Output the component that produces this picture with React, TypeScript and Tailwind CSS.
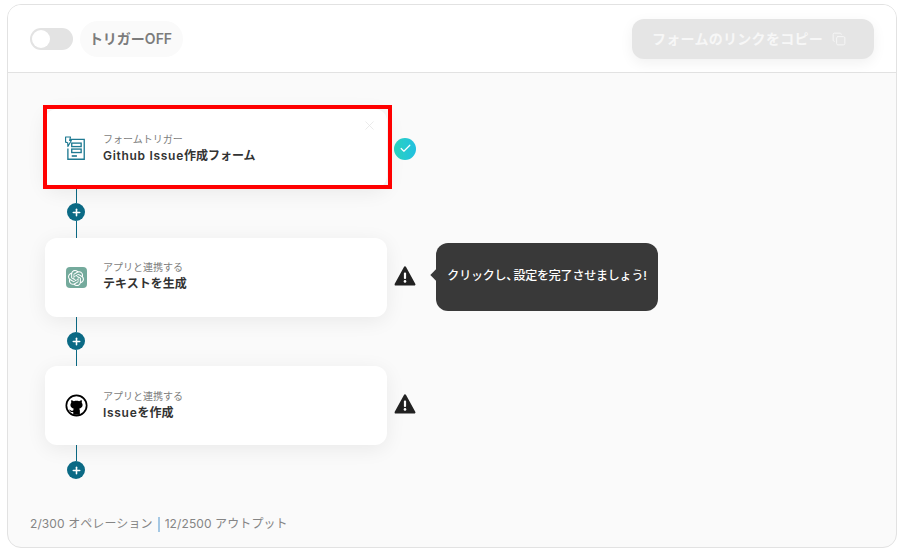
import { Check, Copy, Plus, X } from 'lucide-react'
import { SiOpenai } from 'react-icons/si'
import type { ReactNode } from 'react'

const WarningIcon = () => (
  <svg width="22" height="20" viewBox="0 0 22 20" className="mb-[4px] block">
    <path d="M11 1.6 L20.2 18.4 H1.8 Z" fill="#222222" stroke="#222222" strokeWidth="2.4" strokeLinejoin="round" />
    <rect x="9.9" y="6.4" width="2.2" height="6.6" rx="1" fill="#fff" />
    <circle cx="11" cy="15.4" r="1.3" fill="#fff" />
  </svg>
)

const FormIcon = () => (
  <svg width="22" height="25" viewBox="0 0 22 26" fill="none" className="mr-[2px] mb-[1px] block">
    <path d="M5 3.5 H20.6 V24.2 H3.6 V13" stroke="#1f7a92" strokeWidth="1.4" />
    <rect x="7.6" y="7.4" width="9.8" height="3.6" stroke="#1f7a92" strokeWidth="1.4" />
    <rect x="7.6" y="13.6" width="9.8" height="3.6" stroke="#1f7a92" strokeWidth="1.4" />
    <path d="M7.6 20.8 H13" stroke="#0b6a85" strokeWidth="1.4" />
    <path d="M1.2 1 H6.4 L5.4 4.6 H7.2 L3.6 11 L3.4 7 L1.2 6.4 Z" fill="#fff" stroke="#1f7a92" strokeWidth="1.2" strokeLinejoin="round" />
  </svg>
)

const GithubIcon = () => (
  <svg width="23" height="23" viewBox="0 0 24 24" fill="none" className="mb-[1px] block">
    <circle cx="12" cy="12" r="10.6" stroke="#000" strokeWidth="1.8" />
    <path
      d="M6.7 6.2 L9.3 7.5 C10.9 7 13.1 7 14.7 7.5 L17.3 6.2 C17.7 7.3 17.7 8.3 17.5 9.1 C18.2 10 18.5 11 18.3 12.1 C18 14 16.6 15 14.8 15.3 C15.3 15.9 15.5 16.5 15.5 17.2 V21.6 H8.6 V18.7 C6.5 19.1 5.2 18.4 4.3 16.1 C5.3 16.3 5.9 16.9 6.5 17.4 C7.2 17.6 7.9 17.5 8.6 17.2 C8.6 16.4 8.8 15.8 9.2 15.3 C7.4 15 6 14 5.7 12.1 C5.5 11 5.8 10 6.5 9.1 C6.3 8.3 6.3 7.3 6.7 6.2 Z"
      fill="#000"
    />
  </svg>
)

const Connector = ({ top, tail }: { top: string; tail?: string }) => (
  <div className="flex w-[62px] flex-col items-center">
    <div className={`w-px bg-[#0b6a85] ${top}`} />
    <div className="flex h-[18px] w-[18px] items-center justify-center rounded-full bg-[#0b6a85]">
      <Plus size={11} strokeWidth={3.4} className="text-white" />
    </div>
    {tail && <div className={`w-px bg-[#0b6a85] ${tail}`} />}
  </div>
)

const Latin = ({ children }: { children: ReactNode }) => <span className="tracking-[0.7px]">{children}</span>

type NodeProps = {
  icon: ReactNode
  label: string
  title: ReactNode
  status: ReactNode
  textPad?: string
  children?: ReactNode
}

const FlowNode = ({ icon, label, title, status, textPad = 'pb-0', children }: NodeProps) => (
  <div className="flex items-center">
    <div className="relative flex h-[79px] w-[342px] items-center rounded-[12px] bg-white shadow-[0_4px_20px_rgba(0,0,0,0.07)]">
      <div className="flex w-[58px] justify-center pl-[4px]">{icon}</div>
      <div className={`flex flex-col ${textPad}`}>
        <span className="text-[10px] leading-[14px] text-[#7d7d7d]">{label}</span>
        <span className="mt-[1px] text-[12px] leading-[18px] font-semibold text-[#333333]">{title}</span>
      </div>
      {children}
    </div>
    <div className="ml-[6px] flex w-[24px] justify-center">{status}</div>
  </div>
)

export default function App() {
  return (
    <div className="h-[554px] w-[902px] bg-white pt-[4px] pr-[5px] pb-[6px] pl-[7px] font-['Inter','Noto_Sans_CJK_JP',sans-serif]">
      <div className="flex h-[544px] flex-col overflow-hidden rounded-[14px] border border-[#e2e2e2] bg-[#fafafa]">
        <header className="flex h-[68px] shrink-0 items-center justify-between border-b border-[#e2e2e2] bg-white px-[22px]">
          <div className="flex items-center gap-[7px]">
            <div className="flex h-[22px] w-[43px] items-center rounded-full bg-[#e3e3e3] pl-[2px]">
              <div className="h-[18px] w-[18px] rounded-full bg-white" />
            </div>
            <div className="flex h-[36px] w-[103px] items-center justify-center rounded-full bg-[#fafafa] pr-[2px] text-[14px] font-semibold text-[#7c7c7c]">
              トリガーOFF
            </div>
          </div>
          <button className="flex h-[40px] w-[242px] items-center justify-center gap-[9px] rounded-[12px] bg-[#e5e5e5] pr-[8px] text-[14px] font-semibold tracking-[0.3px] text-[#f7f7f7] shadow-[0_4px_14px_rgba(0,0,0,0.06)]">
            フォームのリンクをコピー
            <Copy size={14} strokeWidth={1.6} />
          </button>
        </header>

        <main className="flex flex-1 flex-col pt-[36px] pl-[37px]">
          <FlowNode
            icon={<FormIcon />}
            label="フォームトリガー"
            title={
              <>
                <Latin>Github Issue</Latin>作成フォーム
              </>
            }
            status={
              <div className="flex h-[22px] w-[22px] items-center justify-center rounded-full bg-gradient-to-r from-[#2dd4bf] to-[#22bfe0]">
                <Check size={13} strokeWidth={2.2} className="text-white" />
              </div>
            }
          >
            <X size={15} strokeWidth={1.2} className="absolute top-[9px] right-[10px] text-[#e4e4e4]" />
            <div className="pointer-events-none absolute -top-[4px] -left-[2px] h-[84px] w-[349px] border-4 border-[#ff0000]" />
          </FlowNode>
          <Connector top="h-[15px]" tail="h-[17px]" />
          <FlowNode
            icon={
              <div className="flex h-[21px] w-[21px] items-center justify-center rounded-[4px] bg-[#74aa9c]">
                <SiOpenai size={16} className="text-white" />
              </div>
            }
            label="アプリと連携する"
            title="テキストを生成"
            status={<WarningIcon />}
            textPad="pb-[2px]"
          >
            <div className="absolute top-[5px] left-[391px] flex h-[68px] w-[222px] items-center justify-center rounded-[12px] bg-[#393939] pb-[2px] text-[12px] font-medium tracking-[-0.2px] text-white">
              <div className="absolute top-[28px] -left-[4px] h-[8px] w-[8px] rotate-45 bg-[#393939]" />
              クリックし<span className="tracking-[-5px]">、</span>設定を完了させましょう!
            </div>
          </FlowNode>
          <Connector top="h-[15px]" tail="h-[16px]" />
          <FlowNode
            icon={<GithubIcon />}
            label="アプリと連携する"
            title={
              <>
                <Latin>Issue</Latin>を作成
              </>
            }
            status={<WarningIcon />}
          />
          <Connector top="h-[16px]" />
          <footer className="mt-[36px] -ml-[15px] flex items-center text-[12px] tracking-[0.1px] text-[#858585]">
            <span>2/300 オペレーション</span>
            <span className="mx-[5px] h-[15px] w-[2px] bg-[#a5c8e4]" />
            <span>12/2500 アウトプット</span>
          </footer>
        </main>
      </div>
    </div>
  )
}
